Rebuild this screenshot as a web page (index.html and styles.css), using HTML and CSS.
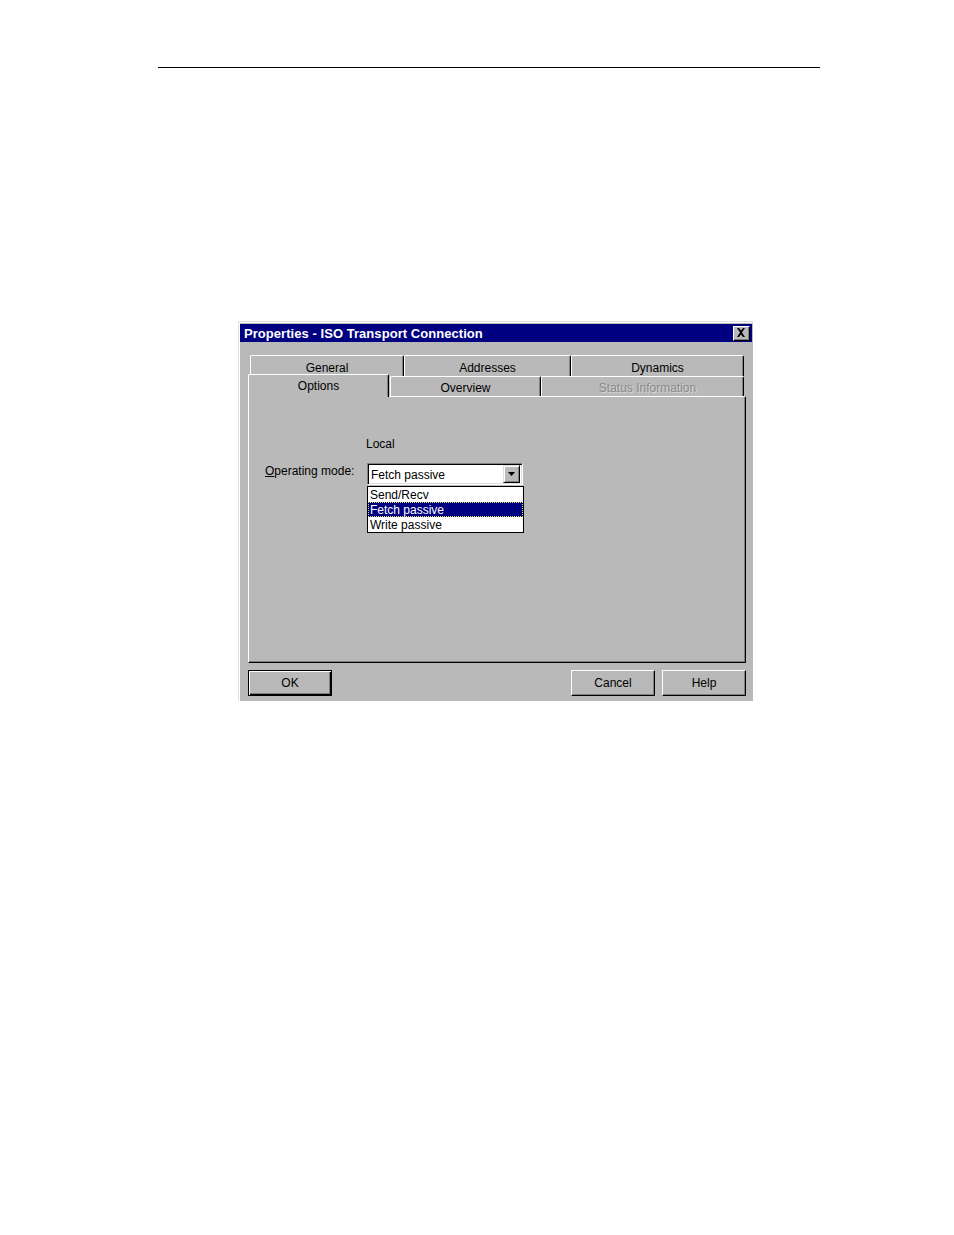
FILE: index.html
```html
<!DOCTYPE html>
<html>
<head>
<meta charset="utf-8">
<link rel="stylesheet" href="styles.css">
</head>
<body>
<div class="rule"></div>
<div class="dialog">
  <div class="titlebar">
    <span class="title">Properties - ISO Transport Connection</span>
    <span class="close"><svg width="10" height="9" viewBox="0 0 10 9"><path d="M1 0h2l2 2.5L7 0h2L6 4.5 9 9H7L5 6.5 3 9H1l3-4.5z" fill="#000"/></svg></span>
  </div>
  <div class="body">
    <div class="tabrow back">
      <div class="tab t-general">General</div>
      <div class="tab t-addr">Addresses</div>
      <div class="tab t-dyn">Dynamics</div>
    </div>
    <div class="tabrow front">
      <div class="tab t-opt selected">Options</div>
      <div class="tab t-over">Overview</div>
      <div class="tab t-stat disabled">Status Information</div>
    </div>
    <div class="panel">
      <div class="local">Local</div>
      <div class="field">
        <div class="label"><u>O</u>perating mode:</div>
        <div class="combo-wrap">
          <div class="combo">
            <span class="combo-text">Fetch passive</span>
            <span class="drop"><svg width="7" height="4" viewBox="0 0 7 4"><path d="M0 0h7L3.5 4z" fill="#000"/></svg></span>
          </div>
          <div class="list">
            <div class="item">Send/Recv</div>
            <div class="item hl">Fetch passive</div>
            <div class="item">Write passive</div>
          </div>
        </div>
      </div>
    </div>
    <div class="buttons">
      <div class="btn default">OK</div>
      <div class="spacer"></div>
      <div class="btn">Cancel</div>
      <div class="btn">Help</div>
    </div>
  </div>
</div>
</body>
</html>
```

FILE: styles.css
```css
html, body {
  margin: 0;
  padding: 0;
  background: #fff;
}
body {
  font-family: "Liberation Sans", Arial, sans-serif;
  font-size: 12px;
  color: #000;
}
.rule {
  margin: 67px 0 0 158px;
  width: 662px;
  height: 1px;
  background: #000;
}
.dialog {
  margin: 253px 0 0 238px;
  width: 515px;
  height: 380px;
  box-sizing: border-box;
  background: #b9b9b9;
  border-top: 1px solid #dedede;
  border-left: 1px solid #dedede;
  box-shadow: inset 1px 1px 0 #fff;
  padding: 2px 0 0 1px;
}
.titlebar {
  width: 512px;
  height: 18px;
  background: #000080;
  display: flex;
  align-items: center;
  justify-content: space-between;
  box-sizing: border-box;
  padding: 0 2px 0 4px;
}
.title {
  color: #fff;
  font-weight: bold;
  font-size: 13px;
  letter-spacing: 0.05px;
  padding-top: 1px;
}
.close {
  width: 17px;
  height: 15px;
  box-sizing: border-box;
  background: #b9b9b9;
  border-top: 1px solid #fff;
  border-left: 1px solid #fff;
  border-right: 1px solid #000;
  border-bottom: 1px solid #000;
  box-shadow: inset -1px -1px 0 #808080;
  display: flex;
  align-items: center;
  justify-content: center;
  padding: 0 1px 1px 0;
}
.body {
  margin-left: 8px;
  width: 498px;
  padding-top: 13px;
}
.tabrow {
  display: flex;
}
.tabrow.back {
  height: 21px;
  padding-left: 2px;
}
.tabrow.front {
  height: 20px;
  align-items: flex-end;
}
.tab {
  box-sizing: border-box;
  height: 21px;
  border-top: 1px solid #fff;
  border-left: 1px solid #fff;
  border-right: 1px solid #000;
  border-radius: 2px 2px 0 0;
  box-shadow: inset -1px 0 0 #808080;
  display: flex;
  align-items: center;
  justify-content: center;
  padding-top: 4px;
}
.front .tab {
  height: 20px;
  padding-top: 3px;
}
.t-general { width: 154px; }
.t-addr { width: 167px; }
.t-dyn { width: 173px; }
.t-opt { width: 141px; }
.t-over { width: 151px; margin-left: 1px; }
.t-stat { width: 203px; padding-left: 10px; }
.front .tab.selected {
  height: 23px;
  margin-bottom: -1px;
  position: relative;
  z-index: 2;
  background: #b9b9b9;
  padding-top: 0;
  padding-bottom: 0;
}
.disabled {
  color: #8a8a8a;
  text-shadow: 1px 1px 0 #d8d8d8;
}
.panel {
  position: relative;
  box-sizing: border-box;
  width: 498px;
  height: 267px;
  border-top: 1px solid #fff;
  border-left: 1px solid #fff;
  border-right: 1px solid #000;
  border-bottom: 1px solid #000;
  box-shadow: inset -1px -1px 0 #808080;
}
.local {
  margin: 40px 0 0 117px;
  line-height: 15px;
}
.field {
  display: flex;
  margin: 11px 0 0 16px;
}
.label {
  width: 102px;
  line-height: 15px;
  margin-top: 1px;
}
.combo-wrap {
  position: relative;
}
.combo {
  box-sizing: border-box;
  width: 156px;
  height: 22px;
  background: #fff;
  border-top: 1px solid #808080;
  border-left: 1px solid #808080;
  border-right: 1px solid #fff;
  border-bottom: 1px solid #fff;
  box-shadow: inset 1px 1px 0 #000, inset -1px -1px 0 #dfdfdf;
  display: flex;
  align-items: center;
  justify-content: space-between;
  padding: 1px 2px 1px 3px;
}
.combo-text {
  padding-top: 2px;
}
.drop {
  box-sizing: border-box;
  width: 17px;
  height: 18px;
  background: #b9b9b9;
  border-top: 1px solid #dfdfdf;
  border-left: 1px solid #dfdfdf;
  border-right: 1px solid #000;
  border-bottom: 1px solid #000;
  box-shadow: inset 1px 1px 0 #fff, inset -1px -1px 0 #808080;
  display: flex;
  align-items: center;
  justify-content: center;
}
.list {
  position: absolute;
  left: 0;
  top: 23px;
  width: 157px;
  box-sizing: border-box;
  background: #fff;
  border: 1px solid #000;
  z-index: 5;
}
.item {
  height: 15px;
  line-height: 16px;
  padding-left: 2px;
  box-sizing: border-box;
}
.item.hl {
  background: #000080;
  color: #fff;
  outline: 1px dotted #e8e060;
  outline-offset: -1px;
}
.buttons {
  display: flex;
  margin-top: 7px;
}
.spacer {
  flex: 1;
}
.btn {
  box-sizing: border-box;
  width: 84px;
  height: 26px;
  border-top: 1px solid #fff;
  border-left: 1px solid #fff;
  border-right: 1px solid #000;
  border-bottom: 1px solid #000;
  box-shadow: inset -1px -1px 0 #808080;
  display: flex;
  align-items: center;
  justify-content: center;
  margin-left: 7px;
}
.btn.default {
  margin-left: 0;
  border: 1px solid #000;
  box-shadow: inset 1px 1px 0 #fff, inset -1px -1px 0 #000, inset -2px -2px 0 #808080;
}
```
